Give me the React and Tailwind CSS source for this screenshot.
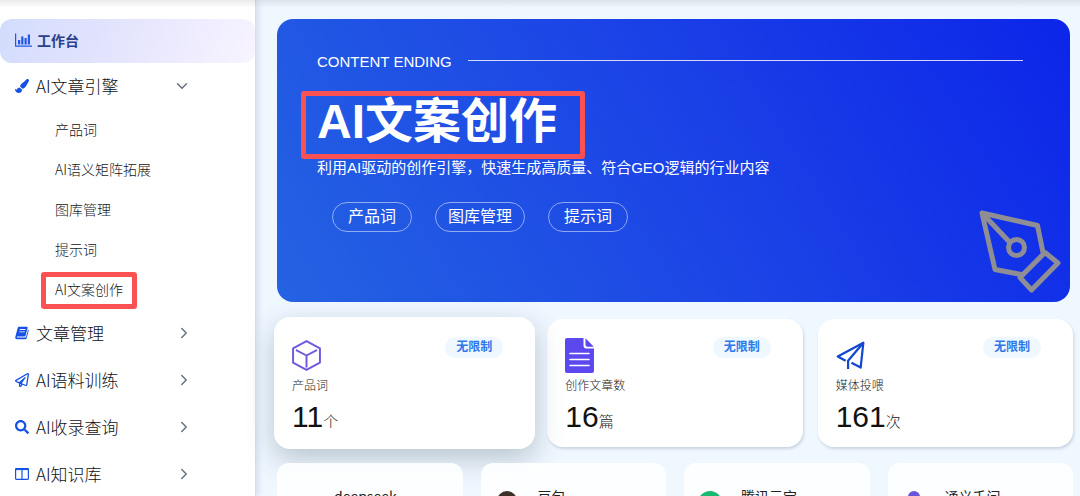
import React from 'react';
import { FaPaintBrush, FaRegPaperPlane, FaSearch } from 'react-icons/fa';
import { ChevronDown, ChevronRight } from 'lucide-react';

const BarChartIcon = (props) => (
  <svg viewBox="0 0 17 14" fill="currentColor" {...props}>
    <path d="M0 0.500h1.200v12H17v1.200H0z" />
    <path d="M3 7h2.200v4.500H3zM6.200 3.500h2.200v8H6.200zM9.500 5h2.200v6.500H9.500zM12.800 1.500H15v10h-2.200z" />
  </svg>
);

const BookIcon = (props) => (
  <svg viewBox="0 0 14 13" fill="currentColor" {...props}>
    <path
      fillRule="evenodd"
      d="M4.200 0.300h7.400c.8 0 1.200.6 1 1.300l-2 7.400c-.2.7-.7 1-1.400 1H2.300c-.7 0-.9 1.100.1 1.100h7.700c.6 0 .9-.3 1-.8l2-7.200c.6.3.7.7.5 1.300l-1.900 7c-.2.8-.8 1.300-1.600 1.300H2C.7 12.700-.1 11.600.3 10.500L2.700 1.600C2.900.8 3.400.3 4.200.3zM4.900 2.600l-.2.8h5.600l.2-.8zM4.300 5l-.2.8h5.600l.2-.8z"
    />
  </svg>
);

const ColumnsIcon = (props) => (
  <svg viewBox="0 0 14 12" fill="none" stroke="currentColor" {...props}>
    <rect x="0.6" y="0.600" width="12.800" height="10.800" rx="0.8" strokeWidth="1.200" />
    <path d="M7 1v10" strokeWidth="1.200" />
    <path d="M0.600 1.200h12.800" strokeWidth="1.800" />
  </svg>
);

const CubeIcon = (props) => (
  <svg viewBox="0 0 28 30" fill="none" stroke="currentColor" strokeWidth="1.900" strokeLinejoin="round" {...props}>
    <path d="M14 1l13 7v14l-13 7-13-7V8z" />
    <path d="M4.500 10L14 15l9.500-5M14 15v11" strokeLinecap="round" />
  </svg>
);

const DocumentIcon = (props) => (
  <svg viewBox="0 0 29 35" fill="currentColor" {...props}>
    <path d="M2 0h16.500v7.500a3 3 0 003 3H29V33a2 2 0 01-2 2H2a2 2 0 01-2-2V2a2 2 0 012-2z" />
    <path d="M20.500 0.300L28.800 8.800h-6.300a2 2 0 01-2-2z" />
    <path d="M5 15.500h19M5 21.500h19M5 27.500h19" stroke="#fff" strokeWidth="1.600" strokeLinecap="round" />
  </svg>
);

const SendIcon = (props) => (
  <svg viewBox="0 0 30 30" fill="none" stroke="currentColor" strokeWidth="2.300" strokeLinejoin="round" {...props}>
    <path d="M10 20.500L1.800 16 28.300 1.800 25.500 27.500 16 22.500" />
    <path d="M28.300 1.800L12.500 20.500V29" />
  </svg>
);

const PenNibIcon = (props) => (
  <svg viewBox="0 0 82 83" fill="none" stroke="currentColor" strokeWidth="5" strokeLinejoin="round" {...props}>
    <path d="M45 65L16 59.500 3 3 58.500 15.500 64 42.500" />
    <path d="M3 3L30 31.500" />
    <circle cx="37.500" cy="37.500" r="8" />
    <path d="M66 42.500L79 53 52.500 80 41 67.500z" />
  </svg>
);

const subItems = ['产品词', 'AI语义矩阵拓展', '图库管理', '提示词', 'AI文案创作'];

const menuItems = [
  { label: '文章管理', Icon: BookIcon },
  { label: 'AI语料训练', Icon: FaRegPaperPlane },
  { label: 'AI收录查询', Icon: FaSearch },
  { label: 'AI知识库', Icon: ColumnsIcon },
];

const stats = [
  { label: '产品词', value: 11, unit: '个', Icon: CubeIcon, iconClass: 'mt-[2px] h-[31px] w-[29px] text-[#7258e0]', active: true },
  { label: '创作文章数', value: 16, unit: '篇', Icon: DocumentIcon, iconClass: 'h-[35px] w-[29px] text-[#5b48ee]' },
  { label: '媒体投喂', value: 161, unit: '次', Icon: SendIcon, iconClass: 'mt-[3px] size-[29px] text-[#1247cf]' },
];

const platforms = [
  { name: 'deepseek', dot: 'mt-5 size-5 bg-[#4d6bfe]' },
  { name: '豆包', dot: 'mt-[5px] size-5 bg-[#3d3029]' },
  { name: '腾讯元宝', dot: 'mt-[5px] size-6 bg-[#18b971]' },
  { name: '通义千问', dot: 'mt-[5px] size-3 bg-[#6655dc]' },
];

const Sidebar = () => (
  <aside className="w-64 shrink-0 border-r border-[#dadde4] bg-white pt-[19px] font-['Noto_Sans_CJK_SC',sans-serif] shadow-[2px_0_6px_rgba(100,116,139,0.2)]">
    <a
      href="#workbench"
      className="flex h-11 items-center rounded-xl bg-linear-[110deg] from-[#d3dcfd] via-[#e5e5fd] to-[#f8f4ff] pb-[2px] pl-[15px] text-sm font-bold text-[#2b3f8c]"
    >
      <BarChartIcon className="mr-[5px] h-[14px] w-[17px] text-[#2158e4]" />
      工作台
    </a>
    <nav>
      <button className="flex h-[47px] w-full items-center pr-16 pb-[2px] pl-[15px] text-[17px] font-light text-[#0c1120]">
        <FaPaintBrush className="mr-[7px] size-[14px] text-[#1551e5]" />
        AI文章引擎
        <ChevronDown className="ml-auto size-[18px] text-[#687180]" />
      </button>
      <ul>
        {subItems.map((item) => (
          <li key={item} className="flex h-10 items-center pb-[2px] pl-[55px] text-sm font-light text-[#14161a]">
            <a href="#item" className="relative">
              {item}
              {item === 'AI文案创作' && (
                <span className="absolute -inset-x-[14px] -top-[7px] -bottom-[10px] rounded-[3px] border-5 border-[#fa5252]" />
              )}
            </a>
          </li>
        ))}
      </ul>
      {menuItems.map(({ label, Icon }) => (
        <button
          key={label}
          className="flex h-[47px] w-full items-center pr-[62px] pb-[2px] pl-[15px] text-[17px] font-light text-[#0c1120]"
        >
          <Icon className="mr-[7px] size-[14px] text-[#1551e5]" />
          {label}
          <ChevronRight className="ml-auto size-[18px] text-[#687180]" />
        </button>
      ))}
    </nav>
  </aside>
);

const Hero = () => (
  <section className="relative mr-[3px] h-[283px] rounded-2xl bg-linear-[58deg] from-[#2463e2] via-[#1c44e6] to-[#0c25e9] pt-8 pl-10 text-white">
    <div className="flex items-center pr-[47px]">
      <span className="text-[15px] leading-[22px]">CONTENT ENDING</span>
      <span className="mb-1 ml-4 h-px flex-1 bg-white/80" />
    </div>
    <h1 className="relative mt-[18px] w-fit text-5xl leading-[62px] font-bold">
      AI文案创作
      <span className="absolute top-0 -right-7 -bottom-[6px] -left-4 rounded-[3px] border-5 border-[#fa5252]" />
    </h1>
    <p className="mt-[3px] text-[15px] leading-6">利用AI驱动的创作引擎，快速生成高质量、符合GEO逻辑的行业内容</p>
    <div className="mt-[22px] ml-[15px] flex gap-[23px]">
      {['产品词', '图库管理', '提示词'].map((tag) => (
        <button
          key={tag}
          className="flex h-[30px] min-w-20 items-center justify-center rounded-full border border-white/50 px-3 text-base"
        >
          {tag}
        </button>
      ))}
    </div>
    <PenNibIcon className="absolute right-[9px] bottom-[9px] h-[83px] w-[82px] text-[#8e8e94]" />
  </section>
);

const StatCard = ({ label, value, unit, Icon, iconClass, active }) => (
  <div
    className={
      active
        ? 'relative -mx-[3px] -my-[2px] rounded-2xl bg-white pt-[21px] pr-8 pb-[14px] pl-[18px] shadow-[0_10px_28px_rgba(60,80,90,0.3)]'
        : 'rounded-2xl bg-white pt-[19px] pr-8 pb-3 pl-[18px] shadow-[1px_2px_3px_rgba(60,80,110,0.2)]'
    }
  >
    <div className="flex h-[34px] items-start justify-between">
      <Icon className={iconClass} />
      <span className="-mt-px rounded-full bg-[#eff7ff] px-[11px] text-xs leading-[21px] font-bold text-[#2e78ea]">
        无限制
      </span>
    </div>
    <div className="mt-1 text-xs leading-5 font-light text-[#222]">{label}</div>
    <div className="mt-[3px] flex items-baseline">
      <span className="text-3xl leading-9 text-[#111]">{value}</span>
      <span className="text-[15px] font-light text-[#222]">{unit}</span>
    </div>
  </div>
);

const PlatformCard = ({ name, dot }) => (
  <div className="flex h-24 items-start rounded-xl bg-white/90 pt-[23px] font-['Noto_Sans_CJK_SC',sans-serif]">
    <span className="flex w-[57px] justify-center pr-[5px]">
      <span className={`rounded-full ${dot}`} />
    </span>
    <span className="text-sm leading-5 text-[#222]">{name}</span>
  </div>
);

export default function App() {
  return (
    <div className="relative flex h-screen overflow-hidden bg-[#eff7ff] font-['Liberation_Sans','Noto_Sans_CJK_SC',sans-serif]">
      <Sidebar />
      <main className="min-w-0 flex-1 pt-[19px] pr-[7px] pl-[21px]">
        <Hero />
        <div className="mt-[17px] grid grid-cols-3 gap-[15px]">
          {stats.map((stat) => (
            <StatCard key={stat.label} {...stat} />
          ))}
        </div>
        <div className="relative mt-4 grid grid-cols-4 gap-[18px]">
          {platforms.map((platform) => (
            <PlatformCard key={platform.name} {...platform} />
          ))}
        </div>
      </main>
      <div className="pointer-events-none absolute inset-x-0 top-0 h-2 bg-linear-to-b from-black/8 to-transparent" />
    </div>
  );
}
